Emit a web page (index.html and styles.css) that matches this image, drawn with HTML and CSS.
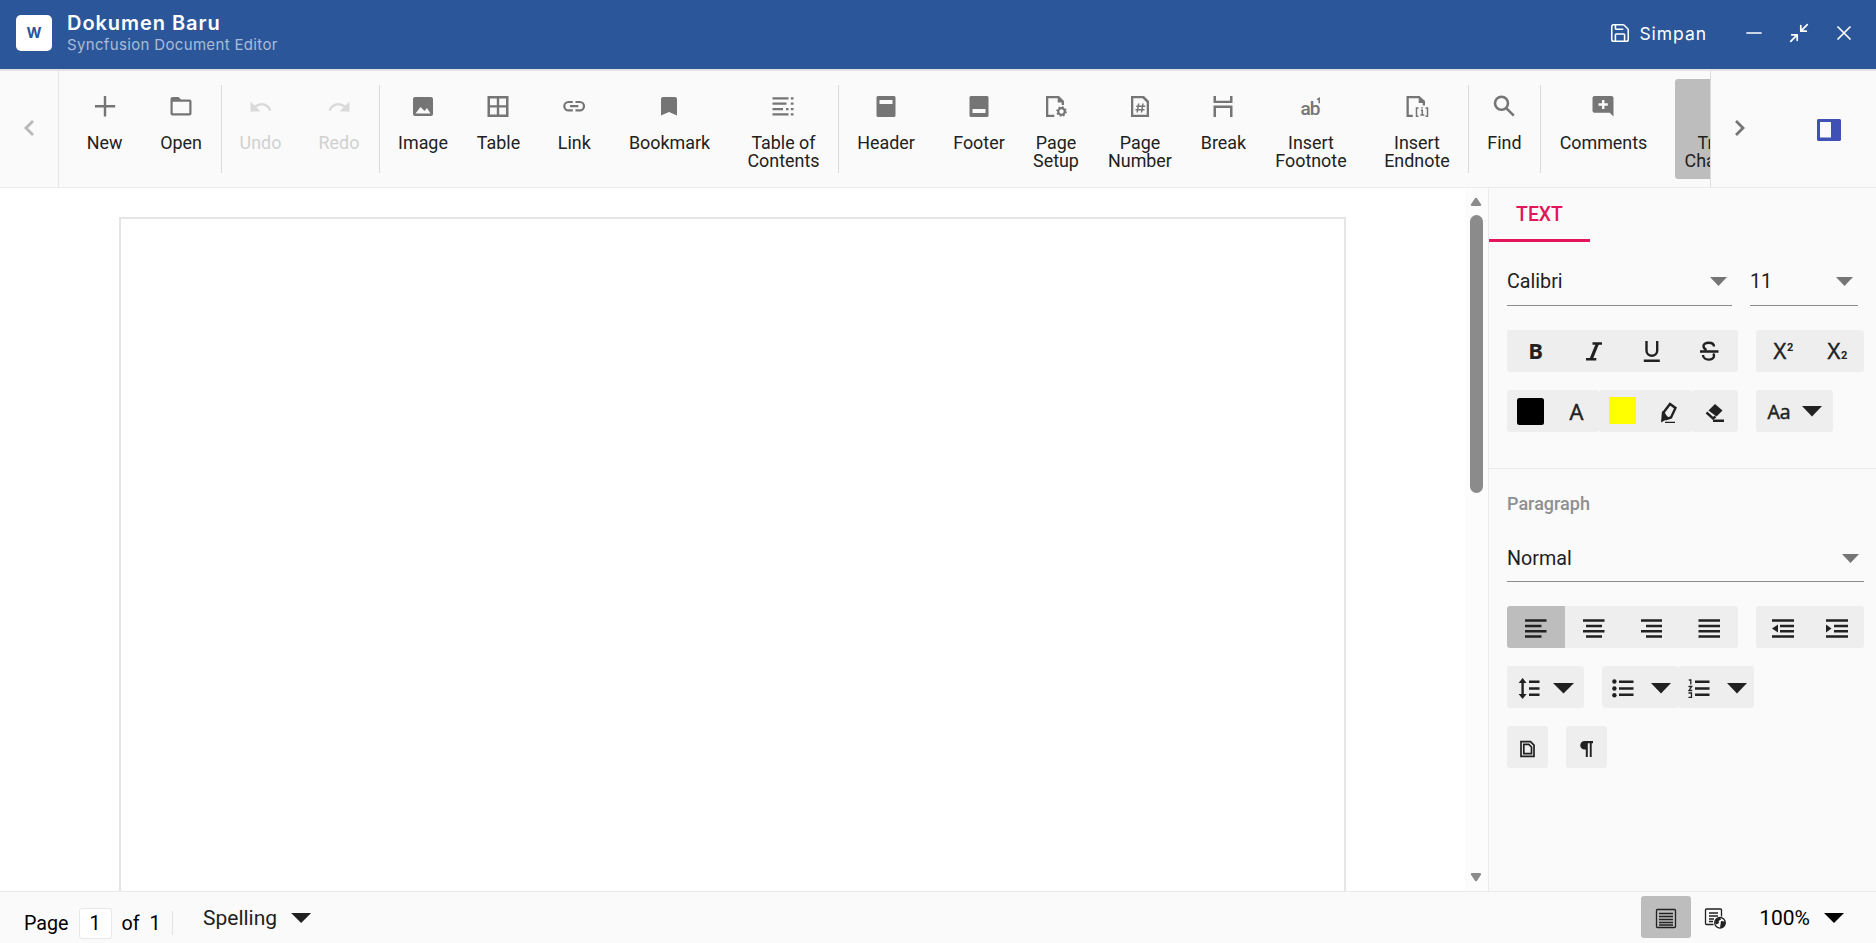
FILE: index.html
```
<!DOCTYPE html>
<html lang="id">
<head>
    <meta charset="UTF-8">
    <meta name="viewport" content="width=device-width, initial-scale=1.0">
    <title>Dokumen Baru</title>
    <link rel="stylesheet" href="styles.css">
</head>
<body>
    <header class="titlebar">
        <div class="logo">W</div>
        <div class="doc-title">
            <h1>Dokumen Baru</h1>
            <p>Syncfusion Document Editor</p>
        </div>
        <button class="save">
            <svg width="22" height="22" viewBox="0 0 24 24"><path d="M15.2 3a2 2 0 0 1 1.4.6l3.8 3.8a2 2 0 0 1 .6 1.4V19a2 2 0 0 1-2 2H5a2 2 0 0 1-2-2V5a2 2 0 0 1 2-2z M17 21v-7a1 1 0 0 0-1-1H8a1 1 0 0 0-1 1v7 M7 3v4a1 1 0 0 0 1 1h7"/></svg>
            Simpan
        </button>
        <div class="window-buttons">
            <svg width="20" height="20" viewBox="0 0 20 20"><path d="M3 10h14"/></svg>
            <svg width="20" height="20" viewBox="0 0 20 20"><path d="M18.3 1.7l-6.500 6.500M11.800 2.700v5.500h5.500M1.700 18.300l6.500-6.500M2.700 11.800h5.500v5.500"/></svg>
            <svg width="20" height="20" viewBox="0 0 20 20"><path d="M4 4l12 12M16 4L4 16"/></svg>
        </div>
    </header>

    <nav class="toolbar">
        <div class="nav-arrow nav-left">
            <svg width="12" height="18" viewBox="0 0 12 18"><path d="M10 2L3 9l7 7"/></svg>
        </div>
        <div class="tools">
            <div class="group group-file">
                <div class="tool">
                    <svg viewBox="0 0 24 24"><path d="M10.800 2h2.400v9h9v2.400h-9v9h-2.400v-9H2V11h8.800z"/></svg>
                    <span>New</span>
                </div>
                <div class="tool">
                    <svg viewBox="0 0 24 24"><path fill-rule="evenodd" d="M3.500 3h6l2.500 2.500h8.500c1.200 0 2 .8 2 2V19.500c0 1.200-.8 2-2 2h-17c-1.200 0-2-.8-2-2V5c0-1.200.8-2 2-2zM3.700 7.700V19.300h16.600V7.700z"/></svg>
                    <span>Open</span>
                </div>
            </div>
            <div class="group group-history">
                <div class="tool disabled">
                    <svg viewBox="0 0 24 24"><path d="M1.500 7.500v10h10l-4-4c1.300-1.200 3-2 5-2 3.500 0 6.500 2.300 7.600 5.500l2.400-.8C21.100 12 17.200 9 12.500 9c-2.700 0-5 1-6.800 2.600z"/></svg>
                    <span>Undo</span>
                </div>
                <div class="tool disabled">
                    <svg viewBox="0 0 24 24"><path d="M22.500 7.500v10h-10l4-4c-1.300-1.200-3-2-5-2-3.500 0-6.500 2.300-7.600 5.500l-2.400-.8C2.900 12 6.800 9 11.500 9c2.700 0 5 1 6.800 2.600z"/></svg>
                    <span>Redo</span>
                </div>
            </div>
            <div class="group group-insert">
                <div class="tool">
                    <svg viewBox="0 0 24 24"><path fill-rule="evenodd" d="M4 3h16c1.100 0 2 .9 2 2v15c0 1.100-.9 2-2 2H4c-1.100 0-2-.9-2-2V5c0-1.100.9-2 2-2zM4.500 19.500h15L16 14l-2.500 3L9.500 13z"/></svg>
                    <span>Image</span>
                </div>
                <div class="tool">
                    <svg viewBox="0 0 24 24"><path fill-rule="evenodd" d="M1.500 2h21v21h-21zM4 4.500v6.700h6.800V4.500zM13.200 4.500v6.700H20V4.500zM4 13.600v6.900h6.800v-6.900zM13.200 13.600v6.900H20v-6.900z"/></svg>
                    <span>Table</span>
                </div>
                <div class="tool">
                    <svg viewBox="0 0 24 24"><path class="line" d="M10.800 8H6.500a4.200 4.200 0 0 0 0 8.400h4.300M13.500 8h4.300a4.200 4.200 0 0 1 0 8.400h-4.300M8 12.200h8.300"/></svg>
                    <span>Link</span>
                </div>
                <div class="tool">
                    <svg viewBox="0 0 24 24"><path d="M6 3h12c1.100 0 2 .9 2 2v16.500l-8-3.500-8 3.500V5c0-1.100.9-2 2-2z"/></svg>
                    <span>Bookmark</span>
                </div>
                <div class="tool">
                    <svg viewBox="0 0 24 24"><path d="M1.500 3.200h16v2.200h-16zM19.800 3.200h2.700v2.200h-2.700zM1.500 8.600h14v2.200h-14zM19.800 8.600h2.700v2.200h-2.700zM1.500 14h10.500v2.200H1.500zM15 14h2.500v2.200H15zM19.800 14h2.700v2.200h-2.700zM1.500 19.300h16v2.200h-16zM19.800 19.300h2.700v2.200h-2.700z"/></svg>
                    <span>Table of<br>Contents</span>
                </div>
            </div>
            <div class="group group-page">
                <div class="tool">
                    <svg viewBox="0 0 24 24"><path fill-rule="evenodd" d="M3.500 2h17l1 1v19l-1 1h-17l-1-1V3zM5.500 6v4h13V6z"/></svg>
                    <span>Header</span>
                </div>
                <div class="tool">
                    <svg viewBox="0 0 24 24"><path fill-rule="evenodd" d="M3.500 2h17l1 1v19l-1 1h-17l-1-1V3zM5.500 15v4h13v-4z"/></svg>
                    <span>Footer</span>
                </div>
                <div class="tool">
                    <svg viewBox="0 0 24 24"><path d="M2 2h13l5 5v4h-2.300V8.500h-4V4.300H4.300v16.400h6V23H2z"/><circle class="line" cx="17.500" cy="17.500" r="3.300" stroke-width="1.500"/><circle class="line teeth" cx="17.500" cy="17.500" r="4.500"/></svg>
                    <span>Page<br>Setup</span>
                </div>
                <div class="tool">
                    <svg viewBox="0 0 24 24"><path fill-rule="evenodd" d="M3 2h13l5 5v16H3zM5.300 4.300v16.400h13.400V8.500L14.500 4.300z"/><path class="line thin" d="M10.700 9.500l-1.500 9M15 9.500l-1.500 9M8.300 12.300h9M7.500 15.700h9"/></svg>
                    <span>Page<br>Number</span>
                </div>
                <div class="tool">
                    <svg viewBox="0 0 24 24"><path d="M2.500 2H5v4.700h14V2h2.500v7h-19zM2.500 11.500h19V23H19v-9.100H5V23H2.500z"/></svg>
                    <span>Break</span>
                </div>
                <div class="tool">
                    <svg viewBox="0 0 24 24"><text class="ab" x="1.500" y="20.800">ab</text><path class="line thin" d="M18.200 5.600l2-1.300v5"/></svg>
                    <span>Insert<br>Footnote</span>
                </div>
                <div class="tool">
                    <svg viewBox="0 0 24 24"><path d="M1.500 2h13l5.500 5v4.500h-2.300V9h-4V4.300H3.800v16.400h4V23H1.500z"/><path class="line thin" d="M13.500 14h-2v8.200h2M20.500 14h2v8.200h-2M15.800 16.200h1.500v4.800M15.300 21h4M17 13v1.500"/></svg>
                    <span>Insert<br>Endnote</span>
                </div>
            </div>
            <div class="group group-find">
                <div class="tool">
                    <svg viewBox="0 0 24 24"><circle class="line bold" cx="9.500" cy="9.300" r="6.500"/><path class="line bold" d="M14 13.800l7.800 7.800"/></svg>
                    <span>Find</span>
                </div>
            </div>
            <div class="group group-review">
                <div class="tool">
                    <svg viewBox="0 0 24 24"><path fill-rule="evenodd" d="M3.500 2h17c1.100 0 2 .9 2 2v18.500l-3.800-3.800H3.500c-1.100 0-2-.9-2-2V4c0-1.100.9-2 2-2zM11 6v3.300H7.500v2.400H11V15h2.400v-3.300h3.400V9.300h-3.400V6z"/></svg>
                    <span>Comments</span>
                </div>
                <div class="tool active">
                    <svg viewBox="0 0 24 24"><path d="M6 2h12v20H6z"/></svg>
                    <span>Track<br>Changes</span>
                </div>
            </div>
        </div>
        <div class="nav-arrow nav-right">
            <svg width="12" height="18" viewBox="0 0 12 18"><path d="M2 2l7 7-7 7"/></svg>
        </div>
        <div class="pane-toggle">
            <svg width="24" height="22" viewBox="0 0 24 22"><path fill-rule="evenodd" d="M1 0h22l1 1v20l-1 1H1l-1-1V1zM3 3v15.500h11V3z"/></svg>
        </div>
    </nav>

    <main class="workspace">
        <section class="viewer">
            <div class="page"></div>
        </section>
        <div class="scrollbar">
            <svg width="12" height="10" viewBox="0 0 12 10"><path d="M5 1.300q1-1.300 2 0l4 6q.8 1.700-1 1.700H2q-1.800 0-1-1.700z"/></svg>
            <div class="thumb"></div>
            <svg class="down" width="12" height="10" viewBox="0 0 12 10"><path d="M5 8.700q1 1.300 2 0l4-6Q11.800 1 10 1H2Q.2 1 1 2.700z"/></svg>
        </div>
        <aside class="pane">
            <div class="tab">TEXT</div>
            <div class="text-section">
                <div class="row fields">
                    <div class="field font-name">Calibri<i class="arrow"></i></div>
                    <div class="field font-size">11<i class="arrow"></i></div>
                </div>
                <div class="row">
                    <div class="btns">
                        <svg width="58" height="42" viewBox="0 0 58 42"><text class="g-bold" x="21.300" y="29">B</text></svg>
                        <svg width="58" height="42" viewBox="0 0 58 42"><path class="stroke" d="M27.500 13.500h9.500M21 29.300h10.300"/><path class="stroke heavy" d="M32.500 13.500L26 29.300"/></svg>
                        <svg width="58" height="42" viewBox="0 0 58 42"><path class="stroke" d="M23.500 11v9.500c0 7 10.700 7 10.700 0V11M20.800 30.800h16"/></svg>
                        <svg width="57" height="42" viewBox="0 0 57 42"><path class="stroke" d="M19 21.500H37.500M33 16.500c0-5-10.500-5-10.500-.5 0 2 1 3 3 4M22 25c0 6 11 6 11 1 0-1.500-.3-2-.8-2.500"/></svg>
                    </div>
                    <div class="btns">
                        <svg width="54" height="42" viewBox="0 0 54 42"><text class="g-x" x="17.500" y="29.300">X</text><text class="g-small" x="31" y="20.500">2</text></svg>
                        <svg width="54" height="42" viewBox="0 0 54 42"><text class="g-x" x="17.500" y="29.300">X</text><text class="g-small" x="31" y="29.300">2</text></svg>
                    </div>
                </div>
                <div class="row">
                    <div class="btns split">
                        <div class="btn-part">
                            <svg width="46" height="42" viewBox="0 0 46 42"><rect x="10" y="8" width="27" height="27" rx="2.500" fill="#000"/></svg>
                            <svg width="46" height="42" viewBox="0 0 46 42"><text class="g-x" x="16.500" y="30">A</text></svg>
                        </div>
                        <div class="btn-part">
                            <svg width="46" height="42" viewBox="0 0 46 42"><rect x="10" y="7" width="27" height="27" fill="#ff0"/></svg>
                            <svg width="47" height="42" viewBox="0 0 47 42"><path class="stroke" d="M18.500 22.500l6.500-8.500 5.500 4-4.500 9.500-4.500 1.500zM21 28.500l-3-6"/><path d="M17 21l7 7-8 4.500z"/><path class="thin-line" d="M20 32.300h10"/></svg>
                        </div>
                        <div class="btn-part">
                            <svg width="46" height="42" viewBox="0 0 46 42"><path d="M23 14l7.500 6.500-6 6-8-6z"/><path class="stroke" d="M14.500 22.500l6.500 6 2.500-2"/><path class="stroke" d="M21 30.800h11"/></svg>
                        </div>
                    </div>
                    <div class="btns">
                        <svg width="77" height="42" viewBox="0 0 77 42"><text class="g-aa" x="11.500" y="28.700">Aa</text><path d="M46 16h20L56 26.500z"/></svg>
                    </div>
                </div>
            </div>
            <div class="paragraph-section">
                <h2>Paragraph</h2>
                <div class="field">Normal<i class="arrow"></i></div>
                <div class="row">
                    <div class="btns">
                        <svg class="selected" width="58" height="42" viewBox="0 0 58 42"><path class="stroke" d="M18 14.500h21.500M18 20h16.500M18 25.300h21.500M18 30.500h16.500"/></svg>
                        <svg width="58" height="42" viewBox="0 0 58 42"><path class="stroke" d="M18 14.500h21.500M21 20h16M18 25.300h21.500M21 30.500h16"/></svg>
                        <svg width="58" height="42" viewBox="0 0 58 42"><path class="stroke" d="M18 14.500h21M23 20h16M18 25.300h21M23 30.500h16"/></svg>
                        <svg width="57" height="42" viewBox="0 0 57 42"><path class="stroke" d="M17.500 14.500h21.500M17.500 20h21.500M17.500 25.300h21.500M17.500 30.500h21.500"/></svg>
                    </div>
                    <div class="btns">
                        <svg width="54" height="42" viewBox="0 0 54 42"><path class="stroke" d="M16 14.500h22M24 20h14M24 25.300h14M16 30.500h22"/><path d="M16 22.500l6-4v8z"/></svg>
                        <svg width="54" height="42" viewBox="0 0 54 42"><path class="stroke" d="M16 14.500h22M24 20h14M24 25.300h14M16 30.500h22"/><path d="M21.500 22.500l-5.500-4v8z"/></svg>
                    </div>
                </div>
                <div class="row">
                    <div class="btns">
                        <svg width="77" height="42" viewBox="0 0 77 42"><path class="stroke" d="M15.600 15v15M22 15.700h10.500M22 22.500h10.500M22 28.700h10.500"/><path d="M15.600 12l4 5h-8zM15.600 33l4-5h-8z"/><path d="M46 17h21L56.500 27.500z"/></svg>
                    </div>
                    <div class="btns split">
                        <div class="btn-part">
                            <svg width="76" height="42" viewBox="0 0 76 42"><path class="stroke" d="M17 15.700h14.500M17 22.500h14.500M17 28.700h14.500"/><circle cx="12.400" cy="15.500" r="2.200"/><circle cx="12.400" cy="22.500" r="2.200"/><circle cx="12.400" cy="29.300" r="2.200"/><path d="M49 17h20L59 27.500z"/></svg>
                        </div>
                        <div class="btn-part">
                            <svg width="76" height="42" viewBox="0 0 76 42"><path class="stroke" d="M17 15.700h14.500M17 22.500h14.500M17 28.700h14.500"/><path class="thin-line" d="M10.800 14h2v4.500M10.500 20.500h3.200l-2.700 4h3.200M10.500 27h3v4.300h-3"/><path d="M49 17h20L59 27.500z"/></svg>
                        </div>
                    </div>
                </div>
                <div class="row">
                    <div class="btns">
                        <svg width="41" height="42" viewBox="0 0 41 42"><path class="thin-line page-icon" d="M14 15.700h9.500l3.500 3.500V30.300H14zM16.800 18.300h5l2.700 2.700v6.700h-7.700z"/></svg>
                    </div>
                    <div class="btns">
                        <svg width="41" height="42" viewBox="0 0 41 42"><path d="M18.500 15H27v2.200h-1.300V31h-1.900V17.200h-2V31h-2v-7.500h-1.300a4.200 4.200 0 0 1 0-8.500z"/></svg>
                    </div>
                </div>
            </div>
        </aside>
    </main>

    <footer class="statusbar">
        <div class="page-info">
            <span>Page</span>
            <span class="page-input">1</span>
            <span class="of">of</span>
            <span>1</span>
        </div>
        <div class="spelling">Spelling <i class="arrow big"></i></div>
        <div class="views">
            <svg class="selected" width="50" height="42" viewBox="0 0 50 42"><rect class="thin-line" x="15.500" y="13.500" width="19" height="18" rx="1"/><path class="thin-line" d="M18 17.500h14M18 20.500h14M18 23.500h14M18 26.500h14M18 29h14"/></svg>
            <svg width="50" height="42" viewBox="0 0 50 42"><path class="thin-line" d="M22.500 28.500h-7a1 1 0 0 1-1-1V14a1 1 0 0 1 1-1h14a1 1 0 0 1 1 1v6.500M18 17h9M18 20h9M18 23h5M18 25.500h4"/><circle class="thin-line" cx="29" cy="26.800" r="5.300"/><path d="M25 23l4-1.500 1 2-2.500 1.500.5 2-2.500 1.500-1.500-2zM30 25l4 .5.300 2-2.300 4-3 .5z"/></svg>
        </div>
        <div class="zoom">100% <i class="arrow big"></i></div>
    </footer>
</body>
</html>
```
FILE: styles.css
```
* {
    box-sizing: border-box;
}

body {
    margin: 0;
    height: 100vh;
    display: flex;
    flex-direction: column;
    overflow: hidden;
    font-family: Roboto, sans-serif;
    font-size: 19.7px;
    color: #212121;
    background: #fafafa;
}

svg {
    display: block;
    flex-shrink: 0;
}

h1, h2, p {
    margin: 0;
}

/* title bar */
.titlebar {
    display: flex;
    align-items: center;
    height: 69px;
    padding: 0 22px 3px 16px;
    background: #2b579a;
    color: #fff;
    font-family: Inter, sans-serif;
    flex-shrink: 0;
}

.logo {
    width: 36px;
    height: 36px;
    border-radius: 5px;
    background: #fff;
    color: #2b579a;
    font-size: 14.5px;
    font-weight: 700;
    line-height: 35px;
    text-align: center;
}

.doc-title {
    margin-left: 15px;
}

.doc-title h1 {
    font-size: 20px;
    font-weight: 600;
    line-height: 24px;
    letter-spacing: 0.95px;
}

.doc-title p {
    font-size: 15px;
    line-height: 20px;
    letter-spacing: 0.34px;
    color: #aabcd7;
}

.save {
    display: flex;
    align-items: center;
    gap: 8px;
    margin-left: auto;
    padding: 0;
    border: none;
    background: none;
    color: #fff;
    font-family: inherit;
    font-size: 17.5px;
    font-weight: 400;
    letter-spacing: 0.95px;
}

.titlebar svg {
    fill: none;
    stroke: #fff;
    stroke-width: 1.7;
    stroke-linecap: round;
    stroke-linejoin: round;
}

.window-buttons {
    display: flex;
    gap: 25px;
    margin-left: 37px;
}

/* toolbar */
.toolbar {
    display: flex;
    height: 119px;
    border-top: 2px solid #e2e2e2;
    border-bottom: 1px solid #ebebeb;
    flex-shrink: 0;
}

.nav-arrow {
    display: flex;
    align-items: center;
    justify-content: center;
    padding: 0 1px 2px 0;
}

.nav-arrow svg {
    fill: none;
    stroke: #757575;
    stroke-width: 2.8;
}

.nav-left {
    width: 59px;
    border-right: 1px solid #e5e5e5;
}

.nav-left svg {
    stroke: #b8b8b8;
}

.nav-right {
    width: 60px;
    border-left: 1px solid #dcdcdc;
}

.tools {
    display: flex;
    flex: 1;
    overflow: hidden;
    padding: 14px 0 15px;
}

.group {
    display: grid;
    flex-shrink: 0;
    height: 88px;
    border-right: 1px solid #dadada;
}

.group-file {
    padding: 0 2px 0 7px;
    grid-template-columns: 77px 76px;
}

.group-history {
    grid-template-columns: 77px 80px;
}

.group-insert {
    padding-left: 7.6px;
    grid-template-columns: 70.8px 80.2px 71.4px 119px 109px;
}

.group-page {
    padding-right: 2px;
    grid-template-columns: 94px 92px 62px 106px 61px 114px 98px;
}

.group-find {
    grid-template-columns: 71px;
}

.group-review {
    grid-template-columns: 134px 87px;
    border-right: none;
}

.group-review .tool:first-child {
    padding-right: 9px;
}

.tool {
    display: flex;
    flex-direction: column;
    align-items: center;
    height: 100px;
    margin-top: -6px;
    padding-top: 15px;
    text-align: center;
    font-size: 17.9px;
    line-height: 18px;
    white-space: nowrap;
}

.tool svg {
    width: 24px;
    height: 24px;
    margin-bottom: 16px;
    fill: #757575;
}

.tool .line {
    fill: none;
    stroke: #757575;
    stroke-width: 2.2;
}

.tool .thin {
    stroke-width: 1.5;
}

.tool .bold {
    stroke-width: 2.6;
}

.tool .teeth {
    stroke-width: 1.6;
    stroke-dasharray: 1.7 1.83;
}

.ab {
    font-size: 19px;
    font-weight: 500;
    letter-spacing: -1px;
}

.tool.disabled {
    color: #d0d0d0;
}

.tool.disabled svg {
    fill: #dadada;
}

.tool.active {
    background: #bdbdbd;
    border-radius: 3px;
    padding-left: 2px;
}

.tool.active svg {
    visibility: hidden;
}

.pane-toggle {
    display: flex;
    align-items: center;
    width: 106px;
    padding: 1px 0 0 47px;
    fill: #3f51b5;
}

/* document and side pane */
.workspace {
    display: flex;
    flex: 1;
    min-height: 0;
}

.viewer {
    flex: 1;
    padding: 29px 119px 0;
    background: #fff;
}

.page {
    height: 100%;
    border: 2px solid #e5e5e5;
    border-bottom: none;
}

.scrollbar {
    display: flex;
    flex-direction: column;
    align-items: center;
    width: 23px;
    padding: 9px 0;
    background: #fcfcfc;
    fill: #8b8b8b;
}

.scrollbar svg {
    margin-right: 1px;
}

.thumb {
    width: 13px;
    height: 278px;
    margin-top: 8px;
    border-radius: 7px;
    background: #8b8b8b;
}

.scrollbar .down {
    margin-top: auto;
}

.pane {
    width: 388px;
    border-left: 1px solid #ebebeb;
}

.tab {
    width: 101px;
    height: 54px;
    padding-top: 16px;
    border-bottom: 3px solid #e3165b;
    color: #e3165b;
    font-size: 19.4px;
    font-weight: 500;
    line-height: 22px;
    text-align: center;
}

.text-section {
    height: 227px;
    padding: 24px 12px 0 18px;
    border-bottom: 1px solid #ebebeb;
}

.paragraph-section {
    padding: 24px 12px 0 18px;
}

.paragraph-section h2 {
    height: 53px;
    font-size: 18px;
    font-weight: 500;
    line-height: 22px;
    color: #8f8f8f;
}

.field {
    display: flex;
    justify-content: space-between;
    align-items: center;
    height: 36px;
    padding: 0 5px 10px 0;
    border-bottom: 1px solid #8c8c8c;
}

.fields .field {
    height: 40px;
    padding-bottom: 8px;
}

.font-name {
    width: 225px;
}

.font-size {
    width: 108px;
}

.arrow {
    width: 17px;
    height: 9px;
    background: #757575;
    clip-path: polygon(0 0, 100% 0, 50% 100%);
}

.arrow.big {
    width: 20px;
    height: 10px;
    background: #212121;
}

.row {
    display: flex;
    gap: 18px;
    margin-bottom: 18px;
}

.row.fields {
    margin-bottom: 24px;
}

.field + .row {
    margin-top: 24px;
}

.btns {
    display: flex;
    height: 42px;
    border-radius: 3px;
    overflow: hidden;
    background: #eee;
    fill: #212121;
}

.btns.split {
    background: none;
}

.btn-part {
    display: flex;
    border-radius: 3px;
    background: #eee;
}

.selected {
    background: #bdbdbd;
}

.stroke {
    fill: none;
    stroke: #212121;
    stroke-width: 2.4;
}

.stroke.heavy {
    stroke-width: 3.2;
}

.thin-line {
    fill: none;
    stroke: #212121;
    stroke-width: 1.3;
}

.page-icon {
    stroke-width: 1.7;
}

.g-bold {
    font-family: "Open Sans", sans-serif;
    font-size: 22px;
    font-weight: 700;
}

.g-x, .g-aa {
    font-family: "Open Sans", sans-serif;
    font-size: 22px;
    stroke: #212121;
    stroke-width: 0.5;
}

.g-aa {
    font-size: 19.5px;
}

.g-small {
    font-size: 11px;
    font-weight: 700;
}

/* status bar */
.statusbar {
    display: flex;
    height: 52px;
    border-top: 1px solid #ebebeb;
    flex-shrink: 0;
    color: #000;
}

.page-info {
    display: flex;
    align-items: center;
    height: 24px;
    width: 173px;
    margin-top: 19px;
    padding-left: 24px;
    border-right: 1px solid #e2e2e2;
}

.page-input {
    width: 33px;
    height: 31px;
    margin: 0 10px;
    border: 1px solid #e8e8e8;
    border-radius: 3px;
    background: #fff;
    line-height: 30px;
    text-align: center;
}

.of {
    margin-right: 10px;
}

.spelling, .zoom {
    display: flex;
    align-items: center;
    gap: 14px;
    height: 52px;
    font-size: 21px;
}

.spelling {
    margin-left: 30px;
    color: #212121;
}

.views {
    display: flex;
    margin: 4px 18px 0 auto;
    height: 42px;
    fill: #212121;
}

.views .selected {
    border-radius: 3px;
}

.zoom {
    margin-right: 32px;
}

.zoom .arrow {
    background: #000;
}
```
